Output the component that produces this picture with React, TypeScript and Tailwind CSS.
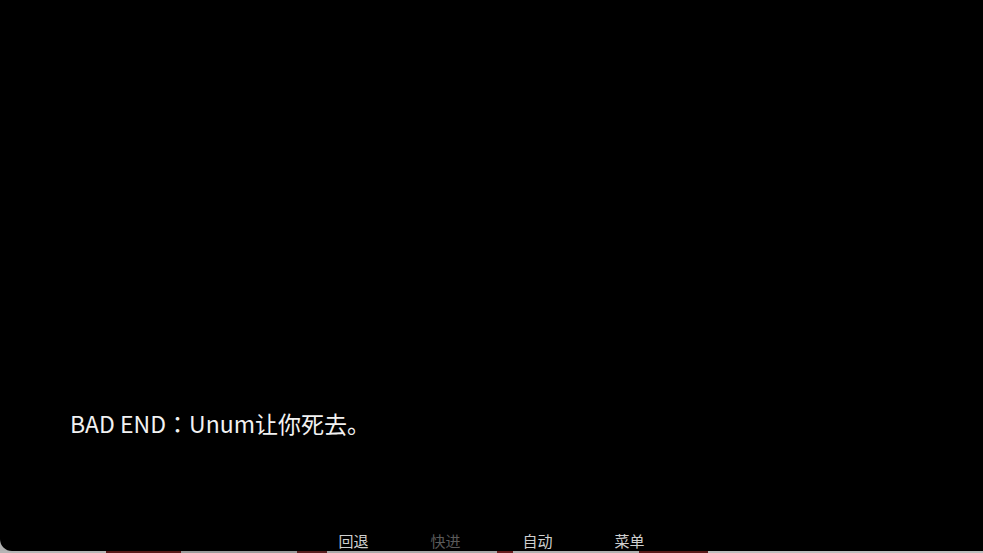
const FONT = { fontFamily: '"Noto Sans CJK JP", "Noto Sans CJK SC", sans-serif' };

const BUTTONS = [
  { label: "回退", dim: false },
  { label: "快进", dim: true },
  { label: "自动", dim: false },
  { label: "菜单", dim: false },
];

// thin strip of whatever sits under the game window
const STRIP = [
  { w: 106, c: "bg-[#b5b5b5]" },
  { w: 75, c: "bg-[#5a1a1a]" },
  { w: 116, c: "bg-[#9a9a9a]" },
  { w: 30, c: "bg-[#5a2020]" },
  { w: 170, c: "bg-[#a8a8a8]" },
  { w: 16, c: "bg-[#6a2020]" },
  { w: 126, c: "bg-[#b0b0b0]" },
  { w: 69, c: "bg-[#5a1a1a]" },
  { w: 275, c: "bg-[#bdbdbd]" },
];

export default function App() {
  return (
    <div className="flex h-[553px] w-full flex-col overflow-hidden bg-[#b0b0b0]" style={FONT}>
      <div className="relative flex flex-1 flex-col rounded-bl-[12px] bg-black">
        <div className="flex-1" />
        <p className="pl-[70px] text-[23px] leading-none text-[#f2f2f2]">BAD END：Unum让你死去。</p>
        <div className="h-[116px]" />
        <nav className="absolute bottom-0 left-0 flex w-full justify-center">
          {BUTTONS.map((b) => (
            <span
              key={b.label}
              className={`w-[92px] text-center text-[15px] leading-[20px] ${b.dim ? "text-[#5a5a5a]" : "text-[#cfcfcf]"}`}
            >
              {b.label}
            </span>
          ))}
        </nav>
      </div>
      <div className="flex h-[2px]">
        {STRIP.map((s, i) => (
          <div key={i} className={`${s.c} shrink-0`} style={{ width: s.w }} />
        ))}
      </div>
    </div>
  );
}
